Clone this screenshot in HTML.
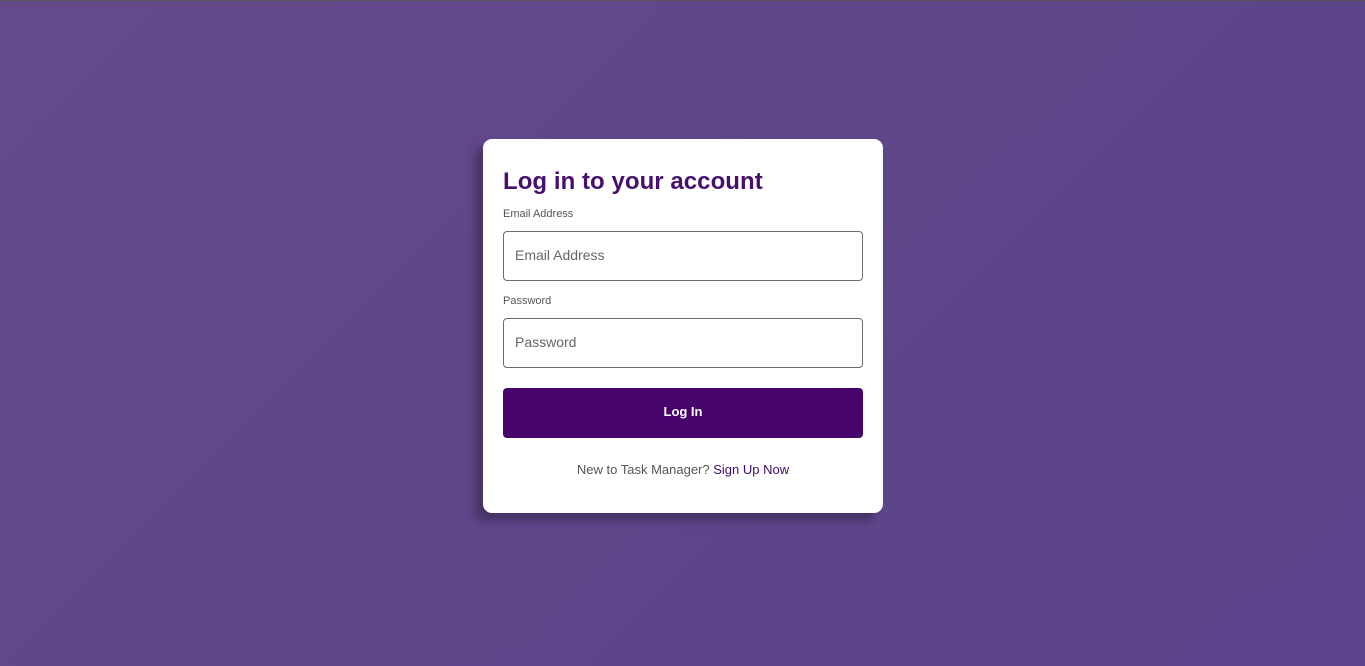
<!DOCTYPE html>
<html><head><style>
html,body{margin:0;padding:0;width:1365px;height:666px;overflow:hidden}
body{background:linear-gradient(135deg,#654a8b 0%,#5e4689 50%,#5b438c 100%);font-family:"Liberation Sans",sans-serif;border-top:1px solid #555;box-sizing:border-box;position:relative}
.card{position:absolute;left:483px;top:138px;width:400px;height:374px;background:#fff;border-radius:9px;box-shadow:-8px 8px 8px rgba(40,30,60,0.45);box-sizing:border-box;padding:0 20px}
h1{margin:0;position:absolute;left:20px;top:29px;font-size:24px;color:#470f6e;font-weight:bold;letter-spacing:0.05px}
.lab{position:absolute;left:20px;font-size:11px;color:#555}
.inp{position:absolute;left:20px;width:360px;height:50px;border:1px solid #6b6b6b;border-radius:4px;box-sizing:border-box;font-size:14px;color:#666;padding:0 11px;line-height:46px}
.btn{position:absolute;left:20px;top:249px;width:360px;height:50px;background:#46036c;border-radius:4px;color:#fff;font-weight:bold;font-size:13px;text-align:center;line-height:48px}
.foot{position:absolute;left:0;width:400px;top:323px;text-align:center;font-size:13px;color:#555}
.foot span{color:#3b0a62}
</style></head><body>
<div class="card">
<h1>Log in to your account</h1>
<div class="lab" style="top:69px">Email Address</div>
<div class="inp" style="top:92px">Email Address</div>
<div class="lab" style="top:156px">Password</div>
<div class="inp" style="top:179px">Password</div>
<div class="btn">Log In</div>
<div class="foot">New to Task Manager? <span>Sign Up Now</span></div>
</div>
</body></html>
